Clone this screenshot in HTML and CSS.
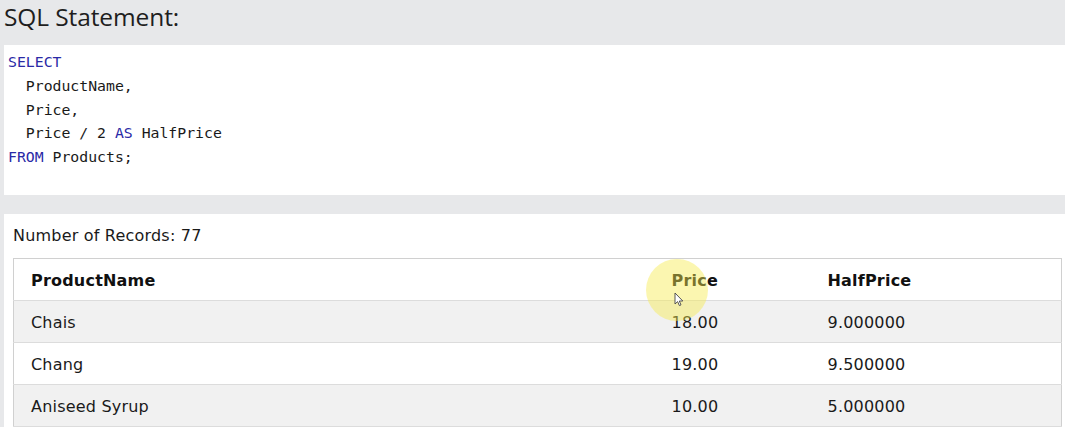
FILE: index.html
```html
<!DOCTYPE html>
<html lang="en">
<head>
<meta charset="utf-8">
<title>SQL Statement</title>
<link rel="stylesheet" href="styles.css">
</head>
<body>
<div class="page">
  <h2 class="title">SQL Statement:</h2>
  <div class="code"><div class="ln"><span class="kw">SELECT</span></div><div class="ln">  ProductName,</div><div class="ln">  Price,</div><div class="ln">  Price / 2 <span class="kw">AS</span> HalfPrice</div><div class="ln"><span class="kw">FROM</span> Products;</div></div>
  <div class="result">
    <div class="count">Number of Records: 77</div>
    <table class="grid">
      <colgroup><col class="c1"><col class="c2"><col class="c3"></colgroup>
      <tr class="head"><th>ProductName</th><th>Price</th><th>HalfPrice</th></tr>
      <tr class="odd"><td>Chais</td><td>18.00</td><td>9.000000</td></tr>
      <tr><td>Chang</td><td>19.00</td><td>9.500000</td></tr>
      <tr class="odd"><td>Aniseed Syrup</td><td>10.00</td><td>5.000000</td></tr>
    </table>
  </div>
</div>
<div class="highlight"></div>
<svg class="cursor" width="10" height="15" viewBox="0 0 10 15"><path d="M1 1 L1 12 L3.6 9.6 L5.4 13.6 L7 12.9 L5.3 9 L8.8 9 Z" fill="#fff" stroke="#444" stroke-width="0.9" stroke-linejoin="round"/></svg>
</body>
</html>
```
FILE: styles.css
```css
html, body {
  margin: 0;
  padding: 0;
  background: #e7e8ea;
  overflow: hidden;
}
.page {
  padding-left: 4px;
}
.title {
  margin: 0;
  height: 45px;
  font-family: "Open Sans", sans-serif;
  font-weight: 400;
  font-size: 24.5px;
  line-height: 34px;
  color: #1e1e1e;
  letter-spacing: -0.1px;
}
.code {
  background: #fff;
  height: 145px;
  padding: 5px 0 0 4px;
  font-family: "DejaVu Sans Mono", monospace;
  font-size: 14.8px;
  color: #1a1a1a;
}
.ln {
  white-space: pre;
  height: 23.75px;
  line-height: 23.75px;
}
.kw {
  color: #2a2aa6;
}
.result {
  margin-top: 19px;
  background: #fff;
  padding: 10px 4px 0 9px;
  height: 203px;
  font-family: "DejaVu Sans", sans-serif;
  font-size: 16px;
  letter-spacing: 0.2px;
  color: #1a1a1a;
}
.count {
  line-height: 24px;
  height: 24px;
  margin-bottom: 10px;
}
.grid {
  width: 1048px;
  border-collapse: collapse;
  border: 1px solid #d0d0d0;
  table-layout: fixed;
}
.c1 { width: 641px; }
.c2 { width: 156px; }
.c3 { width: 251px; }
.grid th, .grid td {
  height: 42px;
  padding: 1px 0 0 17px;
  text-align: left;
  border-bottom: 1px solid #dcdcdc;
  box-sizing: border-box;
}
.grid th {
  font-weight: 700;
  color: #111;
}
.grid .odd td {
  background: #f1f1f1;
}
.highlight {
  position: absolute;
  left: 646px;
  top: 259px;
  width: 62px;
  height: 62px;
  border-radius: 50%;
  background: rgba(246, 236, 80, 0.45);
}
.cursor {
  position: absolute;
  left: 674px;
  top: 292px;
}
```
